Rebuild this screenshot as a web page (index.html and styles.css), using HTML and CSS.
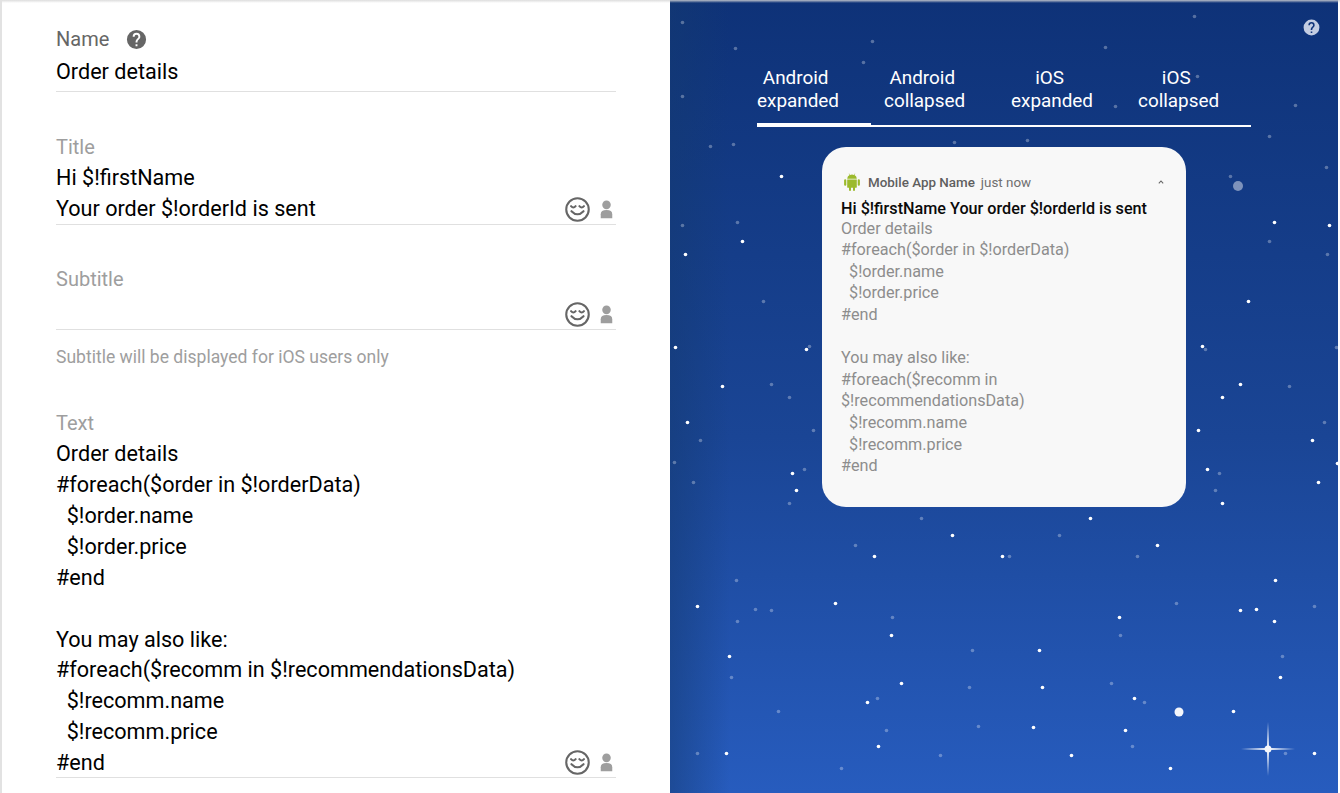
FILE: index.html
```html
<!DOCTYPE html>
<html lang="en">
<head>
<meta charset="utf-8">
<title>Push notification editor</title>
<link rel="stylesheet" href="styles.css">
</head>
<body>
<div class="page">
  <form class="form">
    <section class="field field-name">
      <div class="label-row">
        <span class="label label-dark">Name</span>
        <svg class="help" viewBox="0 0 24 24"><path d="M12 2a10 10 0 1 0 0 20 10 10 0 0 0 0-20zm1 17h-2v-2h2v2zm2.07-7.75-.9.92C13.45 12.9 13 13.5 13 15h-2v-.5c0-1.1.45-2.1 1.17-2.83l1.24-1.26c.37-.36.59-.86.59-1.41a2 2 0 0 0-4 0H8a4 4 0 0 1 8 0c0 .88-.36 1.68-.93 2.25z"/></svg>
      </div>
      <div class="value">Order details</div>
    </section>
    <section class="field field-title">
      <div class="label">Title</div>
      <div class="value">Hi $!firstName
Your order $!orderId is sent</div>
      <div class="tools">
        <svg class="smile" viewBox="0 0 24 24"><circle cx="12" cy="12" r="10.8"/><path d="M5.8 8.8q2.2 2.4 4.4 0M13.800 8.800q2.200 2.400 4.400 0M6.200 13.600q5.800 6 11.600 0"/></svg>
        <svg class="person" viewBox="0 0 14 20"><circle cx="7" cy="5" r="4.6"/><path d="M.8 19.500v-4.500q0-4.500 6.200-4.500t6.200 4.500v4.500z"/></svg>
      </div>
    </section>
    <section class="field field-subtitle">
      <div class="label">Subtitle</div>
      <div class="value value-empty"></div>
      <div class="tools">
        <svg class="smile" viewBox="0 0 24 24"><circle cx="12" cy="12" r="10.8"/><path d="M5.8 8.8q2.2 2.4 4.4 0M13.800 8.800q2.200 2.400 4.400 0M6.200 13.600q5.800 6 11.600 0"/></svg>
        <svg class="person" viewBox="0 0 14 20"><circle cx="7" cy="5" r="4.6"/><path d="M.8 19.500v-4.500q0-4.500 6.200-4.500t6.200 4.500v4.500z"/></svg>
      </div>
    </section>
    <p class="hint">Subtitle will be displayed for iOS users only</p>
    <section class="field field-text">
      <div class="label">Text</div>
      <div class="value">Order details
#foreach($order in $!orderData)
  $!order.name
  $!order.price
#end

You may also like:
#foreach($recomm in $!recommendationsData)
  $!recomm.name
  $!recomm.price
#end</div>
      <div class="tools">
        <svg class="smile" viewBox="0 0 24 24"><circle cx="12" cy="12" r="10.8"/><path d="M5.8 8.8q2.2 2.4 4.4 0M13.800 8.800q2.200 2.400 4.400 0M6.200 13.600q5.800 6 11.600 0"/></svg>
        <svg class="person" viewBox="0 0 14 20"><circle cx="7" cy="5" r="4.6"/><path d="M.8 19.500v-4.500q0-4.500 6.200-4.500t6.200 4.500v4.500z"/></svg>
      </div>
    </section>
  </form>

  <aside class="preview">
    <svg class="sky" viewBox="0 0 668 793">
      <defs>
        <linearGradient id="rayh"><stop offset="0" stop-color="#fff" stop-opacity="0"/><stop offset=".5" stop-color="#fff"/><stop offset="1" stop-color="#fff" stop-opacity="0"/></linearGradient>
        <linearGradient id="rayv" x1="0" y1="0" x2="0" y2="1"><stop offset="0" stop-color="#fff" stop-opacity="0"/><stop offset=".5" stop-color="#fff"/><stop offset="1" stop-color="#fff" stop-opacity="0"/></linearGradient>
      </defs>
      <g class="dim" id="dim"></g>
      <g class="bright" id="bright"></g>
      <circle class="big" cx="509" cy="712" r="4.5"/>
      <circle class="big-dim" cx="568" cy="186" r="5"/>
      <rect x="571" y="748" width="54" height="2" fill="url(#rayh)"/>
      <rect x="597" y="722" width="2" height="54" fill="url(#rayv)"/>
      <circle class="big" cx="598" cy="749" r="3.5"/>
    </svg>
    <svg class="help help-light" viewBox="0 0 24 24"><path d="M12 2a10 10 0 1 0 0 20 10 10 0 0 0 0-20zm1 17h-2v-2h2v2zm2.07-7.75-.9.92C13.45 12.9 13 13.5 13 15h-2v-.5c0-1.1.45-2.1 1.17-2.83l1.24-1.26c.37-.36.59-.86.59-1.41a2 2 0 0 0-4 0H8a4 4 0 0 1 8 0c0 .88-.36 1.68-.93 2.25z"/></svg>
    <nav class="tabs">
      <a class="tab tab-active"><span class="tab-label">Android&nbsp;<br>expanded</span></a>
      <a class="tab"><span class="tab-label">Android&nbsp;<br>collapsed</span></a>
      <a class="tab"><span class="tab-label">iOS&nbsp;<br>expanded</span></a>
      <a class="tab"><span class="tab-label">iOS&nbsp;<br>collapsed</span></a>
    </nav>
    <article class="card">
      <header class="card-head">
        <svg class="android" viewBox="0 0 16 18"><path d="M3.2 6.400h9.600v7.500q0 .9-.9.9h-.9v2.200a1 1 0 0 1-2 0v-2.200h-2v2.200a1 1 0 0 1-2 0v-2.200h-.9q-.9 0-.9-.9zM1.200 6.200a1.100 1.100 0 0 1 1.100 1.100v4.400a1.100 1.100 0 0 1-2.200 0v-4.400a1.100 1.100 0 0 1 1.100-1.100zM14.800 6.200a1.100 1.100 0 0 1 1.100 1.100v4.400a1.100 1.100 0 0 1-2.200 0v-4.400a1.100 1.100 0 0 1 1.100-1.100zM3.200 5.700q.1-2.400 2.300-3.600l-.8-1.300.4-.2.900 1.300q2-.8 4 0l.9-1.300.4.200-.8 1.300q2.200 1.200 2.300 3.600z"/></svg>
        <span class="app-name">Mobile App Name</span>
        <span class="app-time">just now</span>
        <svg class="chev" viewBox="0 0 6 4"><path d="M.8 3.400 3 1l2.200 2.400"/></svg>
      </header>
      <div class="card-title">Hi $!firstName Your order $!orderId is sent</div>
      <div class="card-body">Order details
#foreach($order in $!orderData)
  $!order.name
  $!order.price
#end

You may also like:
#foreach($recomm in $!recommendationsData)
  $!recomm.name
  $!recomm.price
#end</div>
    </article>
  </aside>
</div>
<script src="stars.js"></script>
</body>
</html>
```

FILE: stars.js
```js
var dim = [[682,22],[735,48],[872,41],[863,62],[682,96],[710,146],[733,144],[954,142],[682,225],[737,222],[763,301],[809,346],[771,384],[789,397],[700,440],[674,462],[693,482],[813,430],[804,469],[789,503],[921,518],[855,545],[736,580],[755,609],[771,610],[737,621],[892,617],[972,650],[731,677],[969,687],[877,698],[778,711],[886,730],[978,726],[697,753],[940,755],[841,768],[1059,535],[1009,556],[1137,556],[1176,603],[1314,606],[1120,635],[1282,656],[1111,683],[1144,702],[1132,746],[1285,753],[1194,16],[1105,47],[1197,76],[1115,106],[1295,105],[1269,136],[1027,140],[1326,167],[1230,176],[1269,241],[1327,254],[1336,347],[1205,349],[1289,386],[1324,422],[1219,473],[1215,490]];
var bright = [[781,176],[742,241],[685,254],[675,347],[806,349],[722,386],[687,422],[792,473],[796,490],[952,535],[874,556],[697,606],[835,603],[891,635],[729,656],[901,683],[867,702],[878,746],[726,753],[1222,503],[1090,518],[1157,545],[1002,556],[1275,580],[1240,610],[1256,609],[1274,621],[1119,617],[1039,650],[1280,677],[1042,687],[1134,698],[1233,711],[1033,727],[1125,730],[1314,753],[1071,755],[1170,768],[1274,222],[1329,225],[1248,301],[1202,346],[1240,384],[1222,397],[1198,430],[1312,440],[1337,463],[1207,469],[1318,482]];
function plot(id, list, r) {
  var g = document.getElementById(id);
  list.forEach(function (p) {
    var c = document.createElementNS('http://www.w3.org/2000/svg', 'circle');
    c.setAttribute('cx', p[0] - 670 + 0.5);
    c.setAttribute('cy', p[1] + 0.5);
    c.setAttribute('r', r);
    g.appendChild(c);
  });
}
plot('dim', dim, 1.8);
plot('bright', bright, 1.8);
```

FILE: styles.css
```css
* { box-sizing: border-box; }
html, body { margin: 0; height: 100%; background: #fff; overflow: hidden; }
body { font-family: Roboto, "Liberation Sans", sans-serif; }

.page {
  display: flex;
  height: 793px;
  width: 1340px;
  border-left: 2px solid #e2e2e2;
  position: relative;
  padding-right: 2px;
}
.page::before {
  content: "";
  position: absolute;
  left: 0; right: 0; top: 0;
  height: 3px;
  background: linear-gradient(rgba(215,215,215,.85), rgba(215,215,215,0));
  z-index: 5;
}

.form { width: 668px; flex: none; padding: 25px 54px 0; }

.field { position: relative; border-bottom: 1px solid #e0e0e0; }
.label-row { display: flex; align-items: center; gap: 16px; height: 30px; margin-bottom: 2.15px; }
.label { display: block; font-size: 20px; line-height: 28px; padding-bottom: 2px; color: #9e9e9e; }
.label-dark { color: #666; }
.help { width: 23px; height: 23px; margin-top: -2px; fill: #666; }
.value { margin-top: .15px; font-size: 21.6px; line-height: 30.9px; color: #000; white-space: pre-wrap; }
.value-empty { height: 33.85px; }

.field-name { padding-bottom: 2.95px; }
.field-name .value { margin-top: 0; }
.field-title { margin-top: 41px; }
.field-title .value { margin-bottom: -1px; }
.field-subtitle { margin-top: 40px; }
.field-text { margin-top: 41px; }
.field-text .value { margin-bottom: -2px; }

.hint { margin: 16px 0 0; font-size: 17.55px; line-height: 22px; color: #9e9e9e; }

.tools { position: absolute; right: 3.5px; bottom: 2px; display: flex; align-items: center; gap: 10px; }
.smile { width: 25px; height: 25px; fill: none; stroke: #666; stroke-width: 2; stroke-linecap: round; }
.person { width: 13px; height: 19px; fill: #9e9e9e; }

.preview {
  position: relative;
  flex: none;
  width: 668px;
  height: 793px;
  padding: 64px 0 0 87px;
  background:
    linear-gradient(90deg, rgba(20,58,112,.5), rgba(20,58,112,0) 60px),
    linear-gradient(#0e3278, #1a4595 55%, #275cbe);
  overflow: hidden;
}
.sky { position: absolute; left: 0; top: 0; width: 668px; height: 793px; }
.dim circle { fill: #fff; opacity: .3; }
.bright circle { fill: #fff; }
.big { fill: #f4f6fb; }
.big-dim { fill: #fff; opacity: .45; }
.help-light { position: absolute; right: 17px; top: 17.5px; margin: 0; width: 19px; height: 19px; fill: #c3cde2; }

.tabs { position: relative; display: flex; width: 494px; height: 63px; border-bottom: 2px solid #fff; }
.tab { flex: none; width: 114px; height: 63px; margin-right: 13px; font-size: 18.9px; line-height: 23px; color: #fff; padding-top: 2px; }
.tab-active { border-bottom: 4px solid #fff; }
.tab:last-child { margin-right: 0; }
.tab-label { display: inline-block; text-align: center; }

.card {
  position: relative;
  width: 364px;
  height: 360px;
  margin: 20px 0 0 65px;
  padding: 26px 19px 0;
  background: #f8f8f8;
  border-radius: 24px;
}
.card-head { display: flex; align-items: center; height: 18px; }
.android { flex: none; width: 16px; height: 18px; fill: #9cba2c; margin: 0 0 0 3px; }
.app-name { margin-left: 8px; font-size: 13.4px; font-weight: 500; color: #5f5f5f; }
.app-time { margin-left: 6px; font-size: 13.4px; color: #6f6f6f; }
.chev { margin-left: auto; margin-right: 3px; width: 6px; height: 4px; fill: none; stroke: #666; stroke-width: 1.1; }
.card-title { margin-top: 9.4px; font-size: 16.2px; line-height: 17.2px; font-weight: 500; color: #0a0a0a; }
.card-body { font-size: 16.2px; line-height: 21.6px; color: #8d8d8d; white-space: pre-wrap; }
```
